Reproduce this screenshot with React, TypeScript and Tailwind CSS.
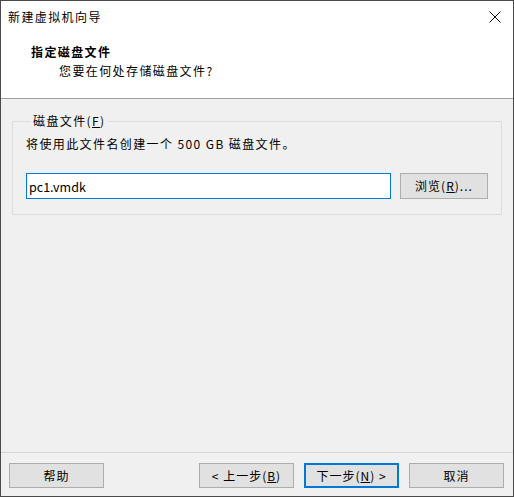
const font = { fontFamily: '"Noto Sans CJK SC", "Noto Sans", sans-serif' };

function Btn({
  children,
  primary,
  className = "w-[95px] h-[25px]",
}: {
  children: React.ReactNode;
  primary?: boolean;
  className?: string;
}) {
  return (
    <button
      className={
        "flex items-center justify-center bg-[#e1e1e1] text-[12px] leading-none tracking-[1px] text-black " +
        (primary ? "border-2 border-[#0078d7] " : "border border-[#adadad] ") +
        className
      }
    >
      {children}
    </button>
  );
}

export default function App() {
  return (
    <div
      style={font}
      className="flex h-[497px] w-[514px] flex-col border border-[#4a4a4a] bg-[#f0f0f0] text-[12px] tracking-[1.4px] text-black"
    >
      {/* title bar */}
      <div className="flex h-[30px] items-center justify-between bg-white pl-[7px] pr-[12px]">
        <span className="mt-[2px] leading-[16px]">新建虚拟机向导</span>
        <svg width="12" height="12" viewBox="0 0 12 12" className="mt-[1px]">
          <path d="M0.5 0.5 L11.5 11.5 M11.5 0.5 L0.5 11.5" stroke="#111" strokeWidth="1" />
        </svg>
      </div>

      {/* wizard header */}
      <div className="h-[68px] border-b border-[#a0a0a0] bg-white pt-[13px]">
        <div className="pl-[30px] font-bold leading-[16px]">指定磁盘文件</div>
        <div className="mt-[3px] pl-[58px] leading-[16px]">您要在何处存储磁盘文件?</div>
      </div>

      {/* body */}
      <div className="flex-1 px-[11px] pt-[14px]">
        <fieldset className="border border-[#dcdcdc] px-[13px] pb-[15px]">
          <legend className="ml-[5px] px-[2px] leading-[16px]">
            磁盘文件(<u>F</u>)
          </legend>
          <p className="mt-[7px] leading-[16px]">将使用此文件名创建一个 500 GB 磁盘文件。</p>
          <div className="mt-[21px] flex gap-[9px]">
            <input
              readOnly
              value="pc1.vmdk"
              style={font}
              className="h-[26px] w-[365px] border border-[#0078d7] bg-white px-[2px] text-[12.5px] tracking-normal text-black outline-none"
            />
            <Btn className="h-[26px] w-[88px]">
              浏览(<u>R</u>)...
            </Btn>
          </div>
        </fieldset>
      </div>

      {/* footer */}
      <div className="flex h-[44px] items-start border-t border-[#d4d4d4] pl-[8px] pr-[9px] pt-[10px]">
        <Btn>帮助</Btn>
        <div className="ml-auto flex gap-[10px]">
          <Btn>
            &lt; 上一步(<u>B</u>)
          </Btn>
          <Btn primary>
            下一步(<u>N</u>) &gt;
          </Btn>
          <Btn>取消</Btn>
        </div>
      </div>
    </div>
  );
}
